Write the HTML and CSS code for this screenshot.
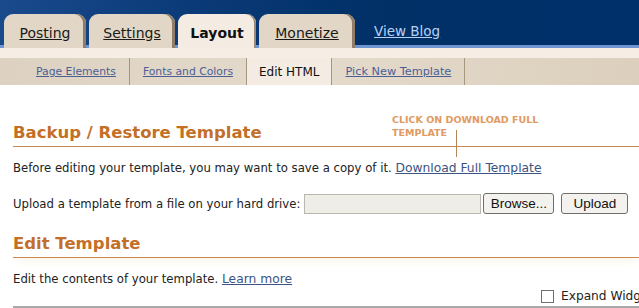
FILE: index.html
```html
<!DOCTYPE html>
<html lang="en">
<head>
    <meta charset="UTF-8">
    <title>Blogger - Edit HTML</title>
    <link rel="stylesheet" href="styles.css">
</head>
<body>
    <div class="header">
        <div class="tabs">
            <a class="tab" href="#">Posting</a>
            <a class="tab" href="#">Settings</a>
            <a class="tab active" href="#">Layout</a>
            <a class="tab" href="#">Monetize</a>
            <a class="view-blog" href="#">View Blog</a>
        </div>
    </div>
    <div class="strip"></div>
    <div class="subnav">
        <a class="sub" href="#">Page Elements</a>
        <a class="sub" href="#">Fonts and Colors</a>
        <span class="sub current">Edit HTML</span>
        <a class="sub" href="#">Pick New Template</a>
    </div>

    <div class="content">
        <div class="section">
            <h2>Backup / Restore Template</h2>
            <div class="note">CLICK ON DOWNLOAD FULL<br>TEMPLATE</div>
            <div class="pointer"></div>
        </div>
        <p class="row">Before editing your template, you may want to save a copy of it. <a href="#">Download Full Template</a></p>
        <div class="row upload">
            <span>Upload a template from a file on your hard drive:</span>
            <span class="file-box"></span>
            <button class="btn browse">Browse...</button>
            <button class="btn">Upload</button>
        </div>

        <div class="section second">
            <h2>Edit Template</h2>
        </div>
        <p class="row">Edit the contents of your template. <a href="#">Learn more</a></p>
        <div class="expand">
            <span class="check"></span>
            <span>Expand Widget</span>
        </div>
        <div class="editor-top"></div>
    </div>
</body>
</html>
```

FILE: styles.css
```css
body {
    margin: 0;
    font-family: 'DejaVu Sans', Verdana, sans-serif;
    font-size: 11.7px;
    color: #222;
    background: white;
    overflow: hidden;
}

a {
    color: #3b5482;
}

.row a {
    font-size: 12.3px;
}

.header {
    height: 45px;
    background: linear-gradient(90deg, #1a4a8c 0%, #0b3a78 30%, #003066 60%, #00306a 100%);
    border-bottom: 3px solid #6e95d2;
}

.tabs {
    display: flex;
    align-items: flex-end;
    height: 45px;
    padding-left: 4px;
    gap: 3px;
}

.tab {
    height: 34px;
    margin-bottom: -3px;
    padding-top: 3px;
    box-sizing: border-box;
    display: flex;
    align-items: center;
    justify-content: center;
    background: #e2d7c6;
    border-radius: 9px 9px 0 0;
    box-shadow: inset -3px 0 0 #8f7d69;
    color: #1a1a1a;
    font-size: 14px;
    line-height: 1;
}

.tab:nth-child(1) { width: 82px; }
.tab:nth-child(2) { width: 86px; }
.tab:nth-child(4) { width: 96px; }

.tab.active {
    width: 78px;
    background: #f4ece3;
    box-shadow: inset -2px 0 0 #9c8a76;
    font-weight: bold;
    text-decoration: none;
    color: #111;
}

.view-blog {
    color: #b9d0f5;
    font-size: 13.5px;
    margin-left: 16px;
    margin-bottom: 6px;
}

.strip {
    height: 10px;
    background: #f6eee5;
}

.subnav {
    display: flex;
    height: 27px;
    background: linear-gradient(90deg, #ddd2c2, #e4dacb 50%, #dccfbd);
    padding-left: 23px;
}

.sub {
    display: flex;
    align-items: center;
    padding: 0 13px;
    border-right: 1px solid #a8977f;
    color: #4a5f94;
    font-size: 10.8px;
}

.sub:last-child {
    font-size: 11.3px;
}

.sub.current {
    background: #f4ece3;
    color: #111;
    text-decoration: none;
    font-size: 12px;
    padding: 0 12px;
}

.content {
    padding: 0 0 0 13px;
}

.section {
    position: relative;
    border-bottom: 1px solid #c58a53;
    padding-top: 36px;
}

.section + .row {
    margin-top: 13px;
}

.second {
    padding-top: 18px;
    box-shadow: 0 8px 8px -4px #fdf6ea;
}

.second + .row {
    margin-top: 13px;
}

h2 {
    margin: 0;
    color: #c46f27;
    font-size: 16.5px;
    line-height: 23px;
    padding-bottom: 2px;
}

.note {
    position: absolute;
    left: 379px;
    top: 28px;
    color: #e09a62;
    font-size: 9.5px;
    font-weight: bold;
    line-height: 13px;
}

.pointer {
    position: absolute;
    left: 443px;
    top: 45px;
    height: 27px;
    border-left: 1px solid #b0855a;
}

.row {
    margin: 0;
    line-height: 16px;
}

.upload {
    display: flex;
    align-items: center;
    margin-top: 17px;
}

.file-box {
    width: 175px;
    height: 18px;
    margin-left: 4px;
    border: 1px solid #b9b7ae;
    background: #eeede8;
}

.btn {
    font-family: 'Liberation Sans', Arial, sans-serif;
    font-size: 13.5px;
    color: #111;
    background: #f3f2ee;
    border: 1px solid #6f6f6a;
    border-radius: 3px;
    height: 21px;
    padding: 0 4px;
    margin-left: 2px;
}

.browse {
    width: 71px;
    margin-right: 5px;
}

.btn:last-child {
    width: 67px;
}

.expand {
    display: flex;
    align-items: center;
    gap: 7px;
    margin-top: 2px;
    padding-left: 528px;
    white-space: nowrap;
    line-height: 14px;
    font-size: 12.2px;
}

.check {
    width: 11px;
    height: 11px;
    flex: none;
    border: 1px solid #6f6f6f;
    background: white;
}

.editor-top {
    height: 4px;
    margin-top: 3px;
    background: #a9a9a9;
}
```
